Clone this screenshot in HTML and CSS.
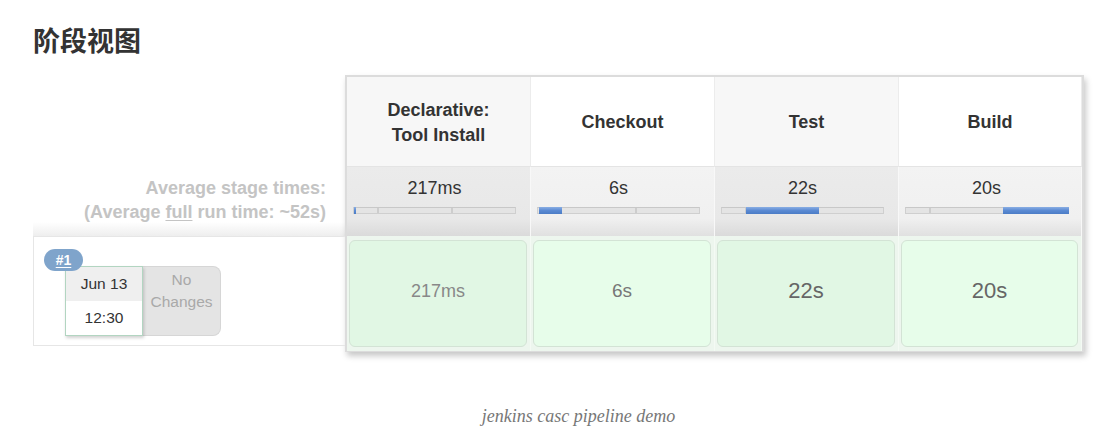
FILE: index.html
```html
<!DOCTYPE html>
<html lang="zh">
<head>
<meta charset="utf-8">
<title>阶段视图</title>
<link rel="stylesheet" href="styles.css">
</head>
<body>
<div class="page">
  <h2 class="title">阶段视图</h2>
  <div class="stage-view">
    <div class="left">
      <div class="left-head"></div>
      <div class="left-avg">
        <div>Average stage times:</div>
        <div>(Average <u>full</u> run time: ~52s)</div>
      </div>
      <div class="run-row">
        <span class="badge"><u>#1</u></span>
        <div class="run-info">
          <div class="date">
            <div class="date-day">Jun 13</div>
            <div class="date-time">12:30</div>
          </div>
          <div class="changes">No<br>Changes</div>
        </div>
      </div>
    </div>
    <div class="stages">
      <div class="head odd"><span>Declarative:<br>Tool Install</span></div>
      <div class="head even"><span>Checkout</span></div>
      <div class="head odd"><span>Test</span></div>
      <div class="head even"><span>Build</span></div>

      <div class="avg odd">
        <div class="avg-time">217ms</div>
        <div class="bar">
          <span class="fill" style="left:0;width:2px"></span>
          <span class="tick" style="left:23px"></span>
          <span class="tick" style="left:97px"></span>
        </div>
      </div>
      <div class="avg even">
        <div class="avg-time">6s</div>
        <div class="bar">
          <span class="fill" style="left:1px;width:23px"></span>
          <span class="tick" style="left:97px"></span>
        </div>
      </div>
      <div class="avg odd">
        <div class="avg-time">22s</div>
        <div class="bar">
          <span class="tick" style="left:23px"></span>
          <span class="fill" style="left:24px;width:73px"></span>
        </div>
      </div>
      <div class="avg even">
        <div class="avg-time">20s</div>
        <div class="bar">
          <span class="tick" style="left:23px"></span>
          <span class="fill" style="left:97px;width:66px"></span>
        </div>
      </div>

      <div class="cellwrap"><div class="cell odd t-small">217ms</div></div>
      <div class="cellwrap"><div class="cell even t-mid">6s</div></div>
      <div class="cellwrap"><div class="cell odd t-big">22s</div></div>
      <div class="cellwrap"><div class="cell even t-big">20s</div></div>
    </div>
  </div>
  <footer class="footer">jenkins casc pipeline demo</footer>
</div>
</body>
</html>
```

FILE: styles.css
```css
* { box-sizing: border-box; }
html, body { margin: 0; padding: 0; background: #fff; }
body {
  font-family: "Liberation Sans", Arial, "Noto Sans CJK SC", sans-serif;
  color: #333;
}
.page { padding-left: 33px; padding-top: 24px; }
.title {
  margin: 0;
  font-family: "Noto Sans CJK SC", "Liberation Sans", sans-serif;
  font-size: 27px;
  line-height: 32px;
  font-weight: 700;
  color: #333;
}
.stage-view {
  display: flex;
  margin-top: 19px;
  align-items: flex-start;
}
.left { width: 312px; }
.left-head { height: 91px; }
.left-avg {
  height: 70px;
  padding-top: 10px;
  padding-right: 19px;
  text-align: right;
  font-size: 18px;
  line-height: 24px;
  font-weight: 700;
  color: #c4c4c4;
  background: linear-gradient(to bottom, #fff 0%, #fff 80%, #eeeeee 100%);
}
.left-avg u { text-decoration-thickness: 1px; text-underline-offset: 2px; }
.run-row {
  position: relative;
  height: 110px;
  border: 1px solid #e6e6e6;
  border-right: none;
  padding: 29px 0 0 31px;
}
.badge {
  position: absolute;
  left: 10px;
  top: 12px;
  width: 39px;
  height: 22px;
  border-radius: 11px;
  background: #7fa4cb;
  color: #fff;
  font-weight: 700;
  font-size: 14px;
  line-height: 22px;
  text-align: center;
  z-index: 2;
}
.badge u { text-underline-offset: 2px; }
.run-info { display: flex; }
.date {
  width: 78px;
  height: 70px;
  border: 1px solid #b2d5c1;
  box-shadow: 1px 2px 3px rgba(0,0,0,0.18);
  font-size: 15.5px;
  text-align: center;
  color: #333;
  position: relative;
  z-index: 1;
}
.date-day { height: 34px; line-height: 33px; background: #efefef; }
.date-time { height: 34px; line-height: 34px; background: #fff; }
.changes {
  width: 78px;
  height: 70px;
  background: #e4e4e4;
  border: 1px solid #d6d6d6;
  border-left: none;
  border-radius: 0 8px 8px 0;
  color: #a9a9a9;
  font-size: 15.5px;
  line-height: 22px;
  text-align: center;
  padding-top: 2px;
}
.stages {
  display: grid;
  grid-template-columns: 184px 184px 184px 183px;
  grid-template-rows: 90px 69px 115px;
  border: 2px solid #dcdcdc;
  border-bottom-width: 1px;
  box-shadow: 2px 4px 6px rgba(0,0,0,0.22);
  background: #fff;
}
.head {
  display: flex;
  align-items: center;
  justify-content: center;
  text-align: center;
  font-size: 18px;
  line-height: 25px;
  font-weight: 700;
  color: #333;
  border-right: 1px solid #ececec;
  border-bottom: 1px solid #e4e4e4;
  padding-top: 2px;
}
.head.odd { background: #f7f7f7; }
.head.even { background: #fff; }
.avg {
  padding: 10px 0 0 6px;
  border-right: 1px solid #f8f8f8;
}
.avg.odd { background: linear-gradient(to bottom, #ebebeb 0%, #e8e8e8 75%, #dadada 100%); }
.avg.even { background: linear-gradient(to bottom, #f3f3f3 0%, #f0f0f0 75%, #e0e0e0 100%); }
.avg-time {
  width: 163px;
  text-align: center;
  font-size: 18px;
  line-height: 22px;
  color: #333;
}
.bar {
  position: relative;
  margin-top: 8px;
  width: 163px;
  height: 7px;
  background: #e4e4e4;
  border: 1px solid #cfcfcf;
  border-top-color: #c8c8c8;
}
.bar .tick {
  position: absolute;
  top: 0;
  bottom: 0;
  width: 2px;
  background: #cdcdcd;
}
.bar .fill {
  position: absolute;
  top: -1px;
  bottom: -1px;
  background: linear-gradient(to bottom, #8aaee3 0%, #5a8ad3 50%, #4b7cc6 100%);
}
.cellwrap {
  background: #edf6ee;
  padding: 4px 3px 3px 2px;
  border-right: 1px solid #f4faf4;
}
.cell {
  height: 107px;
  border: 1px solid #d3e3d5;
  border-radius: 6px;
  display: flex;
  align-items: center;
  justify-content: center;
  padding-bottom: 5px;
}
.cell.odd { background: #e1f7e4; }
.cell.even { background: #e7fdea; }
.t-small { font-size: 18px; color: #888; }
.t-mid { font-size: 19px; color: #777; }
.t-big { font-size: 22px; color: #666; }
.footer {
  margin-top: 54px;
  margin-left: -33px;
  padding-left: 55px;
  text-align: center;
  font-family: "Liberation Serif", "Times New Roman", serif;
  font-style: italic;
  font-size: 18px;
  color: #777;
}
```
